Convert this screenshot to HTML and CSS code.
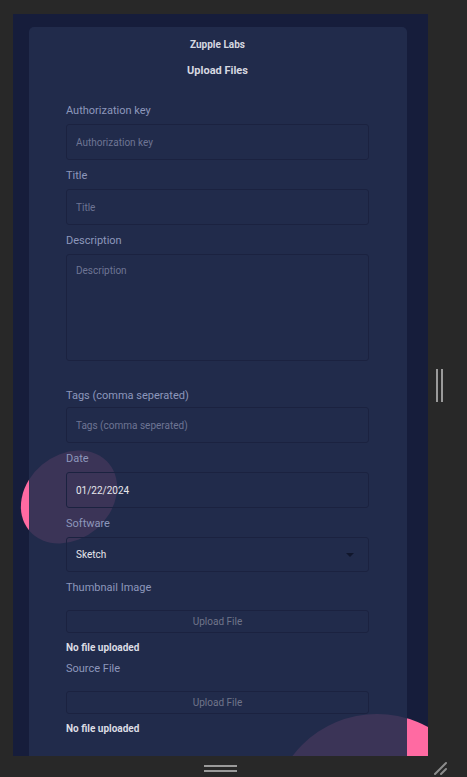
FILE: index.html
```html
<!DOCTYPE html>
<html>
<head>
<meta charset="utf-8">
<link rel="stylesheet" href="styles.css">
</head>
<body>
<div class="stage">
  <div class="viewport">
    <div class="blob blob-left"></div>
    <div class="blob blob-right"></div>
    <div class="card">
      <div class="brand">Zupple Labs</div>
      <h1 class="heading">Upload Files</h1>
      <form class="form">
        <label class="label">Authorization key</label>
        <input class="field" type="text" placeholder="Authorization key">
        <label class="label">Title</label>
        <input class="field" type="text" placeholder="Title">
        <label class="label">Description</label>
        <textarea class="field area" placeholder="Description"></textarea>
        <label class="label label-tags">Tags (comma seperated)</label>
        <input class="field" type="text" placeholder="Tags (comma seperated)">
        <label class="label">Date</label>
        <div class="field value">01/22/2024</div>
        <label class="label">Software</label>
        <div class="field value select">Sketch<span class="caret"></span></div>
        <label class="label label-file">Thumbnail Image</label>
        <div class="upload">Upload File</div>
        <div class="status">No file uploaded</div>
        <label class="label label-file">Source File</label>
        <div class="upload">Upload File</div>
        <div class="status">No file uploaded</div>
      </form>
    </div>
  </div>
  <div class="handle-right"><span></span><span></span></div>
  <div class="handle-bottom"><span></span><span></span></div>
  <div class="handle-corner">
    <svg width="16" height="16" viewBox="0 0 16 16"><path d="M3 14 L14 3 M9 14 L14 9" stroke="#8c8c8c" stroke-width="2" stroke-linecap="round" fill="none"/></svg>
  </div>
</div>
</body>
</html>
```
FILE: styles.css
```css
html, body {
  margin: 0;
  padding: 0;
  background: #282828;
}
body {
  font-family: Roboto, "Noto Sans", sans-serif;
  width: 467px;
  height: 777px;
  overflow: hidden;
}
.stage {
  display: grid;
  grid-template-columns: 13px 415px 39px;
  grid-template-rows: 14px 742px 21px;
}
.viewport {
  grid-column: 2;
  grid-row: 2;
  position: relative;
  overflow: hidden;
  background: #161d3b;
  padding: 13px 21px 0 16px;
}
.blob {
  position: absolute;
  background: #ff6aa2;
}
.blob-left {
  left: 4px;
  top: 441px;
  width: 104px;
  height: 84px;
  border-radius: 50%;
  transform: rotate(-40deg);
}
.blob-right {
  left: 258px;
  top: 700px;
  width: 212px;
  height: 212px;
  border-radius: 50%;
}
.card {
  position: relative;
  z-index: 1;
  background: rgba(35, 45, 77, 0.89);
  border-radius: 5px;
  padding: 11px 38px 60px 37px;
  min-height: 760px;
}
.brand {
  text-align: center;
  color: #d6d8e0;
  font-size: 10px;
  font-weight: 700;
  line-height: 14px;
}
.heading {
  margin: 12px 0 0;
  text-align: center;
  color: #d6d8e0;
  font-size: 11px;
  font-weight: 700;
  line-height: 14px;
}
.form {
  display: flex;
  flex-direction: column;
  margin-top: 26px;
}
.label {
  color: #8d97bb;
  font-size: 11px;
  line-height: 14px;
  margin: 9px 0 6px;
}
.form > .label:first-child {
  margin-top: 0;
}
.label-tags {
  margin-top: 28px;
  margin-bottom: 4px;
}
.label-file {
  margin-bottom: 15px;
}
.field {
  box-sizing: border-box;
  height: 36px;
  width: 100%;
  margin: 0;
  background: transparent;
  border: 1px solid #1b2240;
  border-radius: 3px;
  padding: 0 9px;
  font-family: inherit;
  font-size: 10px;
  color: #e2e3ea;
  outline: none;
}
.field::placeholder {
  color: #6e7594;
}
.area {
  height: 107px;
  padding-top: 10px;
  resize: none;
  display: block;
}
.value {
  display: flex;
  align-items: center;
  color: #e6e6ec;
  font-size: 10px;
}
.select {
  justify-content: space-between;
  height: 35px;
}
.caret {
  width: 0;
  height: 0;
  border-left: 4px solid transparent;
  border-right: 4px solid transparent;
  border-top: 4px solid #10162c;
  margin-right: 5px;
}
.upload {
  box-sizing: border-box;
  height: 23px;
  border: 1px solid #1b2240;
  border-radius: 3px;
  color: #70758a;
  font-size: 10px;
  display: flex;
  align-items: center;
  justify-content: center;
}
.status {
  color: #dcdde4;
  font-size: 10px;
  font-weight: 700;
  line-height: 14px;
  margin-top: 8px;
}
.status + .label {
  margin-top: 7px;
}
.handle-right {
  grid-column: 3;
  grid-row: 2;
  align-self: center;
  display: flex;
  gap: 3px;
  margin-left: 8px;
}
.handle-right span {
  width: 2px;
  height: 33px;
  background: #9a9a9a;
}
.handle-bottom {
  grid-column: 2;
  grid-row: 3;
  justify-self: center;
  display: flex;
  flex-direction: column;
  gap: 3px;
  margin-top: 9px;
}
.handle-bottom span {
  width: 33px;
  height: 2px;
  background: #9a9a9a;
}
.handle-corner {
  grid-column: 3;
  grid-row: 3;
  padding: 4px 0 0 4px;
}
.handle-corner svg {
  display: block;
}
```
